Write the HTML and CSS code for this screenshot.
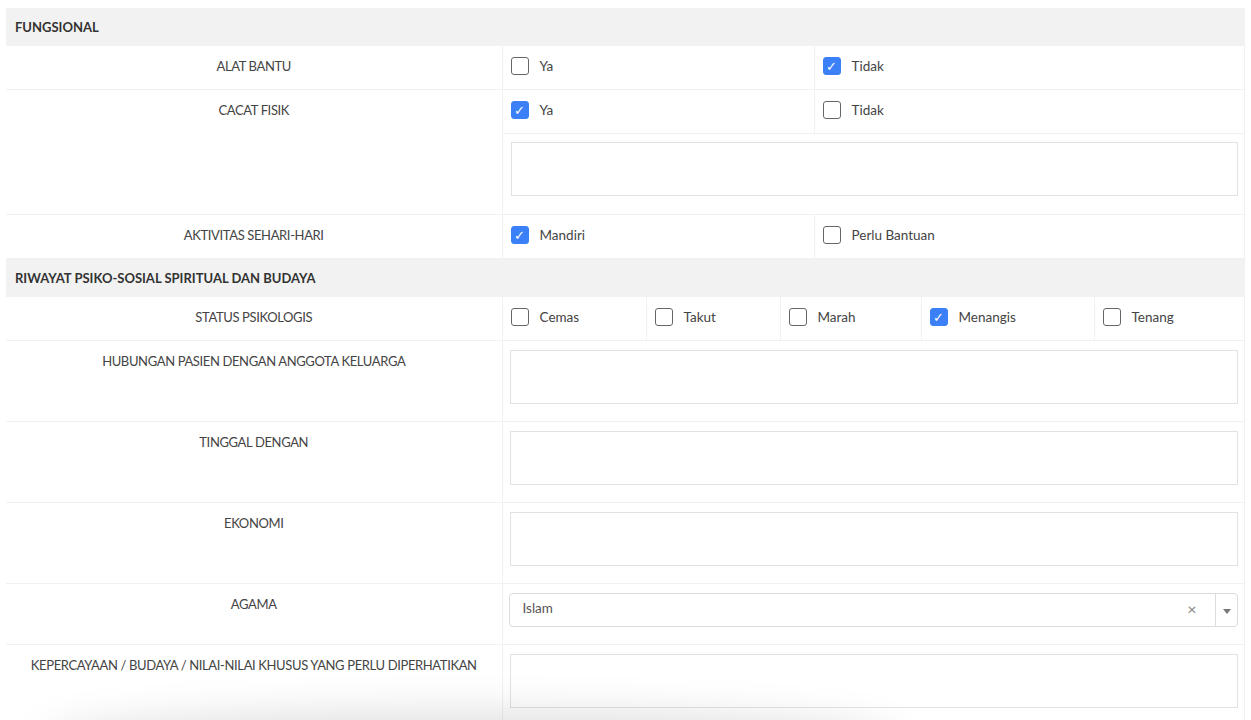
FILE: index.html
```html
<!DOCTYPE html>
<html lang="id">
<head>
    <meta charset="utf-8">
    <title>Asesmen - Fungsional</title>
    <link rel="stylesheet" href="styles.css">
</head>
<body>

<div class="form-wrap">
    <table class="form-table">
        <colgroup>
            <col class="col-label">
            <col class="col-value">
        </colgroup>
        <tr class="spacer"><td></td><td></td></tr>

        <tr class="section">
            <td colspan="2">FUNGSIONAL</td>
        </tr>
        <tr>
            <td class="label">ALAT BANTU</td>
            <td class="value">
                <div class="options options-2">
                    <label class="option"><span class="check"></span>Ya</label>
                    <label class="option"><span class="check checked">&#10003;</span>Tidak</label>
                </div>
            </td>
        </tr>
        <tr>
            <td class="label">CACAT FISIK</td>
            <td class="value">
                <div class="options options-2 options-split">
                    <label class="option"><span class="check checked">&#10003;</span>Ya</label>
                    <label class="option"><span class="check"></span>Tidak</label>
                </div>
                <div class="field field-sub"><textarea></textarea></div>
            </td>
        </tr>
        <tr>
            <td class="label">AKTIVITAS SEHARI-HARI</td>
            <td class="value">
                <div class="options options-2">
                    <label class="option"><span class="check checked">&#10003;</span>Mandiri</label>
                    <label class="option"><span class="check"></span>Perlu Bantuan</label>
                </div>
            </td>
        </tr>

        <tr class="section">
            <td colspan="2">RIWAYAT PSIKO-SOSIAL SPIRITUAL DAN BUDAYA</td>
        </tr>
        <tr>
            <td class="label">STATUS PSIKOLOGIS</td>
            <td class="value">
                <div class="options options-5">
                    <label class="option"><span class="check"></span>Cemas</label>
                    <label class="option"><span class="check"></span>Takut</label>
                    <label class="option"><span class="check"></span>Marah</label>
                    <label class="option"><span class="check checked">&#10003;</span>Menangis</label>
                    <label class="option"><span class="check"></span>Tenang</label>
                </div>
            </td>
        </tr>
        <tr>
            <td class="label">HUBUNGAN PASIEN DENGAN ANGGOTA KELUARGA</td>
            <td class="value"><div class="field"><textarea></textarea></div></td>
        </tr>
        <tr>
            <td class="label">TINGGAL DENGAN</td>
            <td class="value"><div class="field"><textarea></textarea></div></td>
        </tr>
        <tr>
            <td class="label">EKONOMI</td>
            <td class="value"><div class="field"><textarea></textarea></div></td>
        </tr>
        <tr>
            <td class="label">AGAMA</td>
            <td class="value">
                <div class="field field-select">
                    <div class="select">
                        <span class="select-text">Islam</span>
                        <span class="select-clear">&times;</span>
                        <span class="select-arrow"></span>
                    </div>
                </div>
            </td>
        </tr>
        <tr>
            <td class="label">KEPERCAYAAN / BUDAYA / NILAI-NILAI KHUSUS YANG PERLU DIPERHATIKAN</td>
            <td class="value"><div class="field"><textarea></textarea></div></td>
        </tr>
    </table>
</div>

<div class="bottom-shadow"></div>

</body>
</html>
```

FILE: styles.css
```css
html, body {
    margin:0;
    padding:0;
    background:#fff;
}

body {
    font:normal 13px Lato,"Open Sans",Arial,sans-serif;
    color:#444;
    overflow:hidden;
}

.form-wrap {
    padding:0 6px;
}

.form-table {
    width:1239px;
    border-collapse:collapse;
    table-layout:fixed;
}

.col-label {
    width:496px;
}

.form-table td {
    padding:0;
    border-bottom:1px solid #f1f1f1;
    vertical-align:top;
}

.form-table tr.spacer td {
    height:8px;
    border-bottom:0;
}

.form-table td.value {
    border-left:1px solid #f1f1f1;
    border-right:1px solid #f1f1f1;
}

/* section header */
.form-table tr.section td {
    background:#f2f2f2;
    height:38px;
    padding:0 9px;
    vertical-align:middle;
    font-weight:bold;
    color:#333;
    border-bottom:0;
}

.label {
    text-align:center;
    padding-top:12px !important;
    line-height:16px;
    font-size:13px;
    letter-spacing:-0.37px;
}

/* checkbox groups */
.options {
    display:grid;
}

.options-2 {
    grid-template-columns:311px 1fr;
}

.options-5 {
    grid-template-columns:143px 134px 141px 173px 1fr;
}

.options-split {
    border-bottom:1px solid #f1f1f1;
}

.option {
    display:flex;
    align-items:center;
    height:43px;
    padding:0 8px 3px 8px;
    box-sizing:border-box;
    font-size:13.5px;
}

.option + .option {
    border-left:1px solid #f1f1f1;
}

.check {
    display:inline-block;
    flex:none;
    width:18px;
    height:18px;
    border:1px solid #666;
    border-radius:3px;
    box-sizing:border-box;
    margin-right:11px;
    background:#fff;
    color:#fff;
    font:normal 13px "DejaVu Sans",sans-serif;
    line-height:18px;
    text-align:center;
}

.check.checked {
    background:#3b80f6;
    border-color:#3b80f6;
}

/* text fields */
.field {
    padding:9px 6px 17px 7px;
}

.field-sub {
    padding:8px 6px 18px 8px;
}

.field-select {
    padding-left:6px;
}

.field textarea {
    display:block;
    width:100%;
    height:54px;
    box-sizing:border-box;
    border:1px solid #e2e2e2;
    resize:none;
    margin:0;
    font:inherit;
}

.select {
    display:flex;
    align-items:center;
    height:34px;
    box-sizing:border-box;
    border:1px solid #dcdcdc;
    border-radius:4px;
}

.select-text {
    flex:1;
    padding:0 0 4px 13px;
    color:#555;
    font-size:13.5px;
}

.select-clear {
    width:18px;
    color:#888;
    font-size:16px;
    margin-right:14px;
    padding-bottom:3px;
    text-align:center;
}

.select-arrow {
    width:21px;
    height:100%;
    border-left:1px solid #dcdcdc;
    position:relative;
}

.select-arrow:after {
    content:"";
    position:absolute;
    left:7px;
    top:15px;
    border-top:5px solid #777;
    border-left:4px solid transparent;
    border-right:4px solid transparent;
}

/* shadow of floating bar below viewport */
.bottom-shadow {
    position:fixed;
    left:60px;
    width:820px;
    top:730px;
    height:24px;
    border-radius:50%;
    box-shadow:0 0 40px 18px rgba(0,0,0,.13);
}
```
